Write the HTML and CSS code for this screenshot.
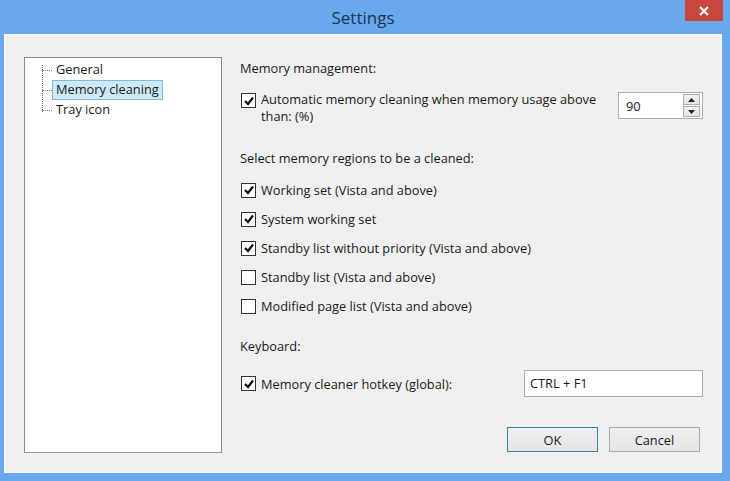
FILE: index.html
```html
<!DOCTYPE html>
<html>
<head>
<meta charset="utf-8">
<link rel="stylesheet" href="styles.css">
</head>
<body>
<div class="window">
  <div class="titlebar">
    <span class="title">Settings</span>
    <div class="close"><svg width="10" height="10" viewBox="0 0 10 10"><path d="M1 1 L9 9 M9 1 L1 9" stroke="#fff" stroke-width="2"/></svg></div>
  </div>
  <div class="client">
    <div class="tree">
      <div class="tree-lines"></div>
      <div class="tree-item"><span class="dash"></span><span class="label">General</span></div>
      <div class="tree-item"><span class="dash"></span><span class="label selected">Memory cleaning</span></div>
      <div class="tree-item"><span class="dash"></span><span class="label">Tray icon</span></div>
    </div>
    <div class="panel">
      <div class="heading">Memory management:</div>
      <div class="auto-row">
        <div class="check-row top">
          <span class="cb checked"><svg viewBox="0 0 12 12" width="12" height="12"><path d="M2 6 L5 9 L10 2.5" stroke="#111" stroke-width="2.2" fill="none"/></svg></span>
          <span class="cb-text multi">Automatic memory cleaning when memory usage above<br>than: (%)</span>
        </div>
        <div class="spin">
          <span class="spin-val">90</span>
          <div class="spin-btns">
            <div class="spin-btn"><svg width="7" height="4" viewBox="0 0 7 4"><path d="M0 4 L3.5 0 L7 4Z" fill="#222"/></svg></div>
            <div class="spin-btn"><svg width="7" height="4" viewBox="0 0 7 4"><path d="M0 0 L3.5 4 L7 0Z" fill="#222"/></svg></div>
          </div>
        </div>
      </div>
      <div class="heading h2">Select memory regions to be a cleaned:</div>
      <div class="list">
        <div class="check-row"><span class="cb checked"><svg viewBox="0 0 12 12" width="12" height="12"><path d="M2 6 L5 9 L10 2.5" stroke="#111" stroke-width="2.2" fill="none"/></svg></span><span class="cb-text">Working set (Vista and above)</span></div>
        <div class="check-row"><span class="cb checked"><svg viewBox="0 0 12 12" width="12" height="12"><path d="M2 6 L5 9 L10 2.5" stroke="#111" stroke-width="2.2" fill="none"/></svg></span><span class="cb-text">System working set</span></div>
        <div class="check-row"><span class="cb checked"><svg viewBox="0 0 12 12" width="12" height="12"><path d="M2 6 L5 9 L10 2.5" stroke="#111" stroke-width="2.2" fill="none"/></svg></span><span class="cb-text">Standby list without priority (Vista and above)</span></div>
        <div class="check-row"><span class="cb"></span><span class="cb-text">Standby list (Vista and above)</span></div>
        <div class="check-row"><span class="cb"></span><span class="cb-text">Modified page list (Vista and above)</span></div>
      </div>
      <div class="heading h3">Keyboard:</div>
      <div class="hotkey-row">
        <div class="check-row"><span class="cb checked"><svg viewBox="0 0 12 12" width="12" height="12"><path d="M2 6 L5 9 L10 2.5" stroke="#111" stroke-width="2.2" fill="none"/></svg></span><span class="cb-text">Memory cleaner hotkey (global):</span></div>
        <div class="hotkey-input">CTRL + F1</div>
      </div>
      <div class="buttons">
        <div class="btn default">OK</div>
        <div class="btn">Cancel</div>
      </div>
    </div>
  </div>
</div>
</body>
</html>
```

FILE: styles.css
```css
html, body {
  margin: 0;
  padding: 0;
}
body {
  width: 730px;
  height: 481px;
  overflow: hidden;
  font-family: "Open Sans", "DejaVu Sans", sans-serif;
  font-size: 12.8px;
  color: #1a1a1a;
}
.window {
  position: relative;
  width: 730px;
  height: 481px;
  background: #6aa8ee;
  box-sizing: border-box;
  padding: 0 8px 8px 4px;
  display: flex;
  flex-direction: column;
}
.titlebar {
  height: 35px;
  display: flex;
  align-items: center;
  justify-content: center;
}
.title {
  font-family: "Open Sans", sans-serif;
  font-size: 17px;
  color: #1d3557;
}
.close {
  position: absolute;
  top: 0;
  left: 685px;
  width: 38px;
  height: 21px;
  background: #c9463d;
  display: flex;
  align-items: center;
  justify-content: center;
}
.client {
  flex: 1;
  background: #f0f0f0;
  border: 1px solid #f8f8f8;
  display: flex;
  padding: 22px 0 19px 19px;
}
.tree {
  position: relative;
  width: 198px;
  background: #fff;
  border: 1px solid #8a8a8a;
  border-bottom-color: #999;
  padding-top: 2px;
  box-sizing: border-box;
  height: 396px;
}
.tree-lines {
  position: absolute;
  left: 17px;
  top: 7px;
  height: 47px;
  border-left: 1px dotted #777;
}
.tree-item {
  display: flex;
  align-items: center;
  height: 20px;
}
.dash {
  width: 10px;
  margin-left: 17px;
  border-top: 1px dotted #777;
}
.label {
  padding: 1px 3px 2px 3px;
  border: 1px solid transparent;
  line-height: 15px;
}
.label.selected {
  background: #cde8f7;
  border-color: #7fb8d8;
}
.panel {
  flex: 1;
  padding-left: 18px;
  padding-right: 19px;
  display: flex;
  flex-direction: column;
}
.heading {
  line-height: 16px;
  margin-top: 3px;
}
.auto-row {
  display: flex;
  justify-content: space-between;
  align-items: flex-start;
  margin-top: 16px;
}
.check-row {
  display: flex;
  align-items: center;
  height: 18px;
}
.check-row.top {
  align-items: flex-start;
  height: auto;
}
.check-row.top .cb {
  margin-top: 1px;
}
.cb-text {
  line-height: 16px;
}
.cb-text.multi {
  line-height: 17px;
  margin-top: -1px;
}
.cb {
  width: 13px;
  height: 13px;
  border: 1px solid #333;
  background: #fff;
  margin-left: 1px;
  margin-right: 5px;
  display: flex;
  align-items: center;
  justify-content: center;
  flex: none;
}
.spin {
  width: 85px;
  height: 27px;
  background: #fff;
  border: 1px solid #abadb3;
  display: flex;
  align-items: center;
  justify-content: space-between;
  box-sizing: border-box;
  margin-right: -1px;
}
.spin-val {
  padding-left: 7px;
}
.spin-btns {
  display: flex;
  flex-direction: column;
  margin-right: 2px;
}
.spin-btn {
  width: 17px;
  height: 11px;
  border: 1px solid #adadad;
  background: linear-gradient(#f4f4f4, #e3e3e3);
  display: flex;
  align-items: center;
  justify-content: center;
  box-sizing: border-box;
}
.spin-btn + .spin-btn {
  margin-top: 1px;
}
.h2 {
  margin-top: 25px;
}
.list {
  display: flex;
  flex-direction: column;
  gap: 11px;
  margin-top: 15px;
}
.h3 {
  margin-top: 23px;
}
.hotkey-row {
  display: flex;
  justify-content: space-between;
  align-items: center;
  margin-top: 16px;
}
.hotkey-input {
  width: 179px;
  height: 27px;
  box-sizing: border-box;
  border: 1px solid #abadb3;
  background: #fff;
  padding-left: 5px;
  line-height: 25px;
  margin-right: -1px;
}
.buttons {
  display: flex;
  justify-content: flex-end;
  gap: 11px;
  margin-top: 30px;
  margin-right: 2px;
}
.btn {
  width: 91px;
  height: 25px;
  box-sizing: border-box;
  border: 1px solid #acacac;
  background: linear-gradient(#f0f0f0, #e5e5e5);
  display: flex;
  align-items: center;
  justify-content: center;
}
.btn.default {
  border-color: #3c7fb1;
}
```
